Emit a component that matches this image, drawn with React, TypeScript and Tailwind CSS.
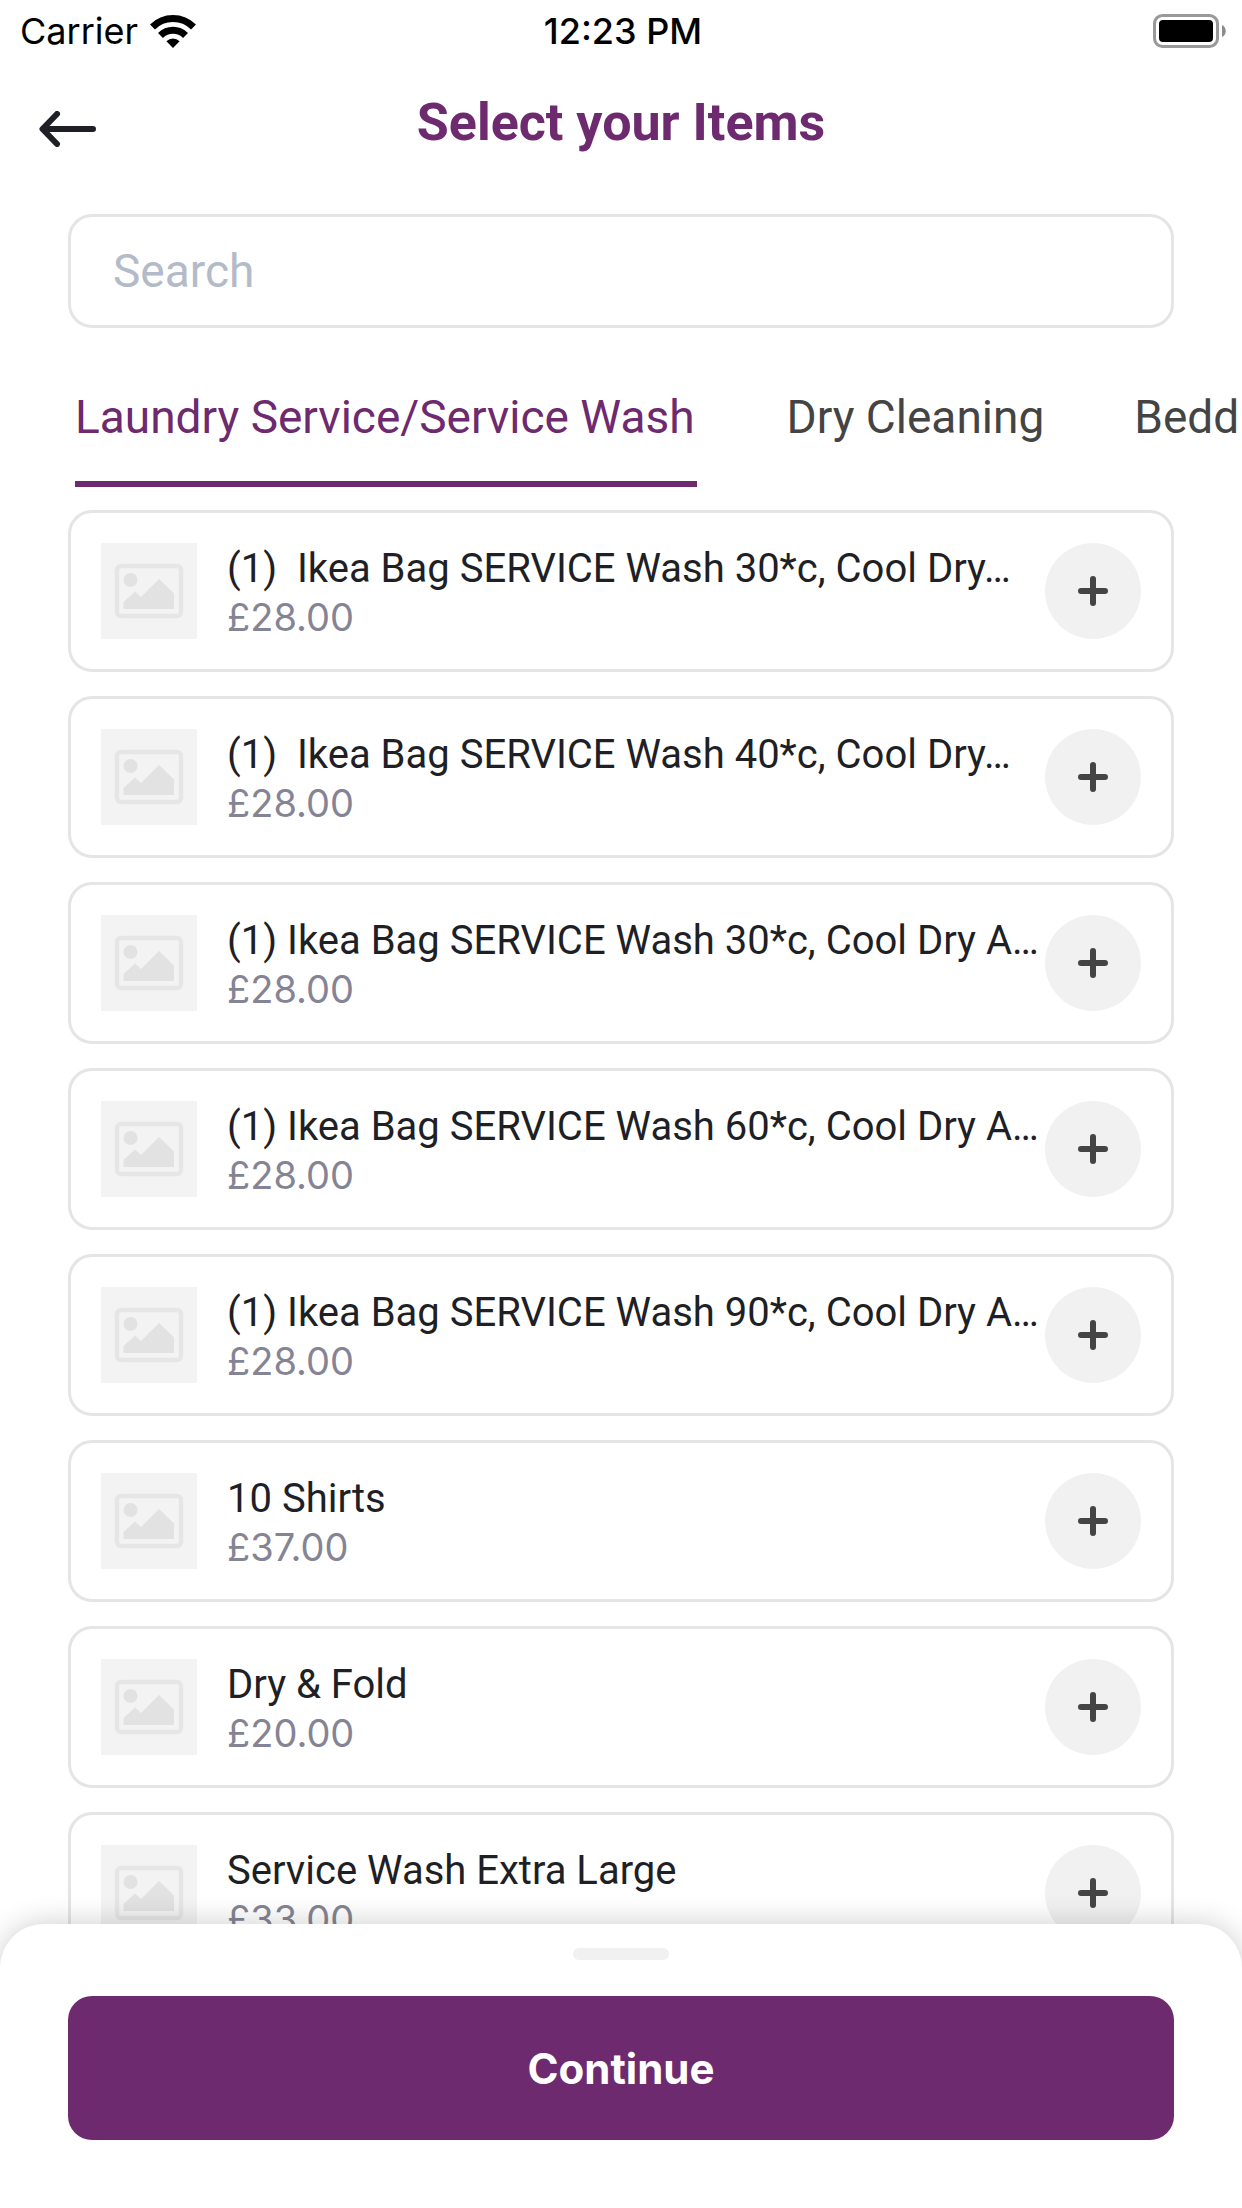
import { useState } from "react"

const items = [
  { id: 1, name: "(1)  Ikea Bag SERVICE Wash 30*c, Cool Dry…", price: "£28.00" },
  { id: 2, name: "(1)  Ikea Bag SERVICE Wash 40*c, Cool Dry…", price: "£28.00" },
  { id: 3, name: "(1) Ikea Bag SERVICE Wash 30*c, Cool Dry A…", price: "£28.00" },
  { id: 4, name: "(1) Ikea Bag SERVICE Wash 60*c, Cool Dry A…", price: "£28.00" },
  { id: 5, name: "(1) Ikea Bag SERVICE Wash 90*c, Cool Dry A…", price: "£28.00" },
  { id: 6, name: "10 Shirts", price: "£37.00" },
  { id: 7, name: "Dry & Fold", price: "£20.00" },
  { id: 8, name: "Service Wash Extra Large", price: "£33.00" },
]

const categories = ["Laundry Service/Service Wash", "Dry Cleaning", "Bedding"]

function WifiIcon() {
  return (
    <svg className="h-[33px] w-[46px]" viewBox="0 0 46 33" fill="none" aria-hidden="true">
      <path d="M2.5 12a29 29 0 0 1 41 0" stroke="#000" strokeWidth="7" />
      <path d="M10.5 20.5a17.8 17.8 0 0 1 25 0" stroke="#000" strokeWidth="7" />
      <path d="M16.4 26.2a9.6 9.6 0 0 1 13.2 0L23 33z" fill="#000" />
    </svg>
  )
}

function BatteryIcon() {
  return (
    <svg className="h-[34px] w-[74px]" viewBox="0 0 74 34" fill="none" aria-hidden="true">
      <rect x="2.5" y="1.5" width="63" height="31" rx="8" stroke="#999" strokeWidth="3" />
      <rect x="7" y="6" width="54" height="22" rx="4" fill="#000" />
      <path d="M70 11c5 2 5 10 0 12z" fill="#8c8c8c" />
    </svg>
  )
}

function BackIcon() {
  return (
    <svg className="h-9 w-[58px]" viewBox="0 0 58 36" fill="none" aria-hidden="true">
      <path
        d="M54 18H4M18 3L3.5 18L18 33"
        stroke="#1f1f26"
        strokeWidth="6"
        strokeLinecap="round"
        strokeLinejoin="round"
      />
    </svg>
  )
}

function Thumbnail() {
  return (
    <svg className="size-24 shrink-0 bg-[#f3f3f3]" viewBox="0 0 96 96" fill="none" aria-hidden="true">
      <rect x="16" y="23" width="64" height="50" rx="4" stroke="#e6e6e6" strokeWidth="4.5" />
      <circle cx="29.5" cy="37" r="7" fill="#e2e2e2" />
      <path d="M22.5 66V59L34 48.5L40 54L58 36L73 50.5V66Z" fill="#e2e2e2" />
    </svg>
  )
}

function PlusIcon() {
  return (
    <svg className="size-[30px]" viewBox="0 0 30 30" fill="none" aria-hidden="true">
      <path d="M15 3V27M3 15H27" stroke="#444" strokeWidth="6" strokeLinecap="round" />
    </svg>
  )
}

function StatusBar() {
  return (
    <div className="grid h-[60px] grid-cols-3 items-center pl-5 pr-4 pt-0.5 font-['Inter','Liberation_Sans',sans-serif] text-[36px] leading-none text-black">
      <div className="flex items-center gap-3">
        <span>Carrier</span>
        <WifiIcon />
      </div>
      <span className="text-center font-medium">12:23 PM</span>
      <div className="flex justify-end">
        <BatteryIcon />
      </div>
    </div>
  )
}

export default function App() {
  const [active, setActive] = useState(categories[0])

  return (
    <div className="flex h-screen flex-col overflow-hidden bg-white font-['Roboto','Liberation_Sans',sans-serif]">
      <StatusBar />

      <header className="grid h-[124px] grid-cols-[1fr_auto_1fr] items-center px-[39px]">
        <button type="button" aria-label="Back" className="mt-3.5 w-fit">
          <BackIcon />
        </button>
        <h1 className="pt-0.5 text-[52px] font-bold leading-[60px] text-[#6d2a6f]">Select your Items</h1>
      </header>

      <div className="mt-[30px] px-[68px]">
        <input
          type="search"
          aria-label="Search"
          placeholder="Search"
          className="h-[114px] w-full rounded-3xl border-3 border-[#e5e5e7] px-[42px] text-[46px] text-[#1f1f26] outline-none placeholder:text-[#b3bac8]"
        />
      </div>

      <nav className="mt-[61px] flex shrink-0 gap-[90px] overflow-hidden pl-[75px]">
        {categories.map((category) => (
          <button
            key={category}
            type="button"
            onClick={() => setActive(category)}
            className={
              category === active
                ? "shrink-0 whitespace-nowrap border-b-6 border-[#6d2a6f] pb-[35px] pr-0.5 text-[46px] leading-[57px] text-[#6d2a6f]"
                : "shrink-0 whitespace-nowrap border-b-6 border-transparent pb-[35px] text-[46px] leading-[57px] text-[#444]"
            }
          >
            {category}
          </button>
        ))}
      </nav>

      <ul className="mt-[23px] flex min-h-0 flex-1 flex-col gap-6 overflow-hidden px-[68px]">
        {items.map((item) => (
          <li
            key={item.id}
            className="flex shrink-0 items-center rounded-3xl border-3 border-[#e5e5e7] p-[30px]"
          >
            <Thumbnail />
            <div className="ml-[30px] min-w-0 flex-1">
              <p className="whitespace-pre text-[40px] leading-[52px] text-[#1f1f26]">{item.name}</p>
              <p className="font-['Inter','Liberation_Sans',sans-serif] text-[38px] leading-[44px] text-[#858494]">
                {item.price}
              </p>
            </div>
            <button
              type="button"
              aria-label={`Add ${item.name}`}
              className="flex size-24 shrink-0 items-center justify-center rounded-full bg-[#f1f1f1]"
            >
              <PlusIcon />
            </button>
          </li>
        ))}
      </ul>

      <footer className="relative z-10 -mt-11 flex shrink-0 flex-col items-center rounded-t-[44px] bg-white px-[68px] pb-[68px] pt-6 shadow-[0_0_30px_rgba(0,0,0,0.2)]">
        <div className="h-3 w-24 rounded-full bg-[#f1f1f1]" />
        <button
          type="button"
          className="mt-9 h-36 w-full rounded-3xl bg-[#6d2a6f] font-['Inter','Liberation_Sans',sans-serif] text-[42px] font-bold text-white"
        >
          Continue
        </button>
      </footer>
    </div>
  )
}
